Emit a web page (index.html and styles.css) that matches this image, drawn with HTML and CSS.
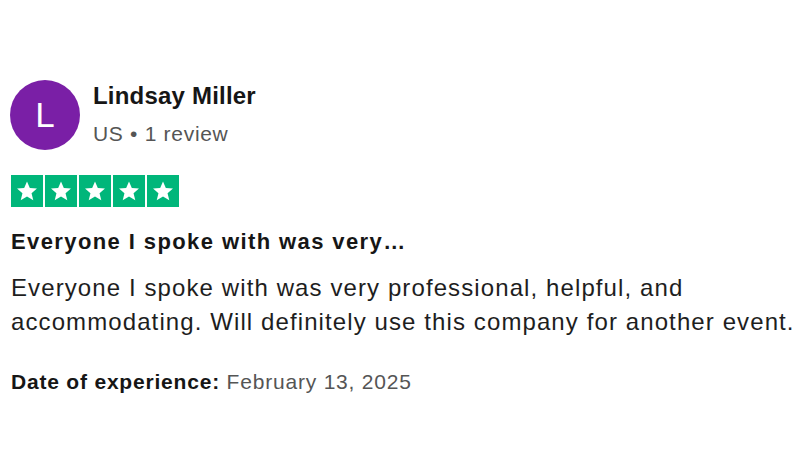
FILE: index.html
```html
<!DOCTYPE html>
<html lang="en">
<head>
    <meta charset="UTF-8">
    <meta name="viewport" content="width=device-width, initial-scale=1.0">
    <title>Review - Lindsay Miller</title>
    <link rel="stylesheet" href="styles.css">
</head>
<body>
    <div class="review">
        <div class="reviewer">
            <div class="avatar">L</div>
            <div class="reviewer-info">
                <div class="name">Lindsay Miller</div>
                <div class="meta">US &bull; 1 review</div>
            </div>
        </div>
        <div class="stars">
            <span class="star"><svg viewBox="0 0 24 24"><path d="M12 3.2l2.6 6.1 6.6.5-5 4.3 1.6 6.5L12 17.1l-5.8 3.5 1.6-6.5-5-4.3 6.6-.5z"/></svg></span>
            <span class="star"><svg viewBox="0 0 24 24"><path d="M12 3.2l2.6 6.1 6.6.5-5 4.3 1.6 6.5L12 17.1l-5.8 3.5 1.6-6.5-5-4.3 6.6-.5z"/></svg></span>
            <span class="star"><svg viewBox="0 0 24 24"><path d="M12 3.2l2.6 6.1 6.6.5-5 4.3 1.6 6.5L12 17.1l-5.8 3.5 1.6-6.5-5-4.3 6.6-.5z"/></svg></span>
            <span class="star"><svg viewBox="0 0 24 24"><path d="M12 3.2l2.6 6.1 6.6.5-5 4.3 1.6 6.5L12 17.1l-5.8 3.5 1.6-6.5-5-4.3 6.6-.5z"/></svg></span>
            <span class="star"><svg viewBox="0 0 24 24"><path d="M12 3.2l2.6 6.1 6.6.5-5 4.3 1.6 6.5L12 17.1l-5.8 3.5 1.6-6.5-5-4.3 6.6-.5z"/></svg></span>
        </div>
        <h2 class="title">Everyone I spoke with was very…</h2>
        <p class="text">Everyone I spoke with was very professional, helpful, and accommodating. Will definitely use this company for another event.</p>
        <p class="date"><b>Date of experience:</b> February 13, 2025</p>
    </div>
</body>
</html>
```

FILE: styles.css
```css
body {
    margin: 0;
    background-color: #fff;
    font-family: "Liberation Sans", Arial, sans-serif;
    color: #161616;
}

.review {
    padding: 80px 0 0 10px;
}

.reviewer {
    display: flex;
    align-items: center;
    gap: 13px;
}

.avatar {
    width: 70px;
    height: 70px;
    border-radius: 50%;
    background-color: #7a1fa6;
    color: #fff;
    font-size: 35px;
    font-weight: 300;
    display: flex;
    align-items: center;
    justify-content: center;
}

.reviewer-info {
    margin-top: -1px;
}

.name {
    font-size: 24px;
    font-weight: bold;
    line-height: 30px;
    letter-spacing: 0.2px;
}

.meta {
    font-size: 21px;
    color: #555;
    line-height: 30px;
    margin-top: 8px;
    letter-spacing: 0.7px;
}

.stars {
    display: flex;
    gap: 2px;
    margin-top: 25px;
    margin-left: 1px;
}

.star {
    width: 32px;
    height: 32px;
    background-color: #00b67a;
    display: flex;
    align-items: center;
    justify-content: center;
}

.star svg {
    width: 26px;
    height: 26px;
    fill: #fff;
}

.title {
    font-size: 22px;
    margin: 21px 0 0 1px;
    line-height: 28px;
    letter-spacing: 1.4px;
}

.text {
    font-size: 24px;
    line-height: 34px;
    margin: 15px 0 0 1px;
    color: #1e1e1e;
    letter-spacing: 1.1px;
}

.date {
    font-size: 21px;
    margin: 31px 0 0 1px;
    color: #555;
    letter-spacing: 0.8px;
}

.date b {
    color: #161616;
}
```
